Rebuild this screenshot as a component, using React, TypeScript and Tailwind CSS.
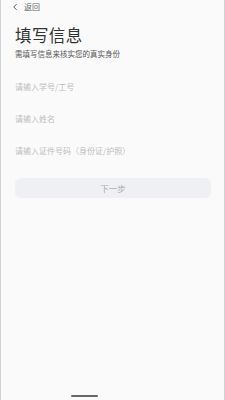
import { ChevronLeft } from "lucide-react"

const fields = ["请输入学号/工号", "请输入姓名", "请输入证件号码（身份证/护照）"]

export default function App() {
  return (
    <div
      className="flex h-[400px] w-[225px] flex-col border-x border-[#d2d2d2] bg-[#fafafa]"
      style={{ fontFamily: '"Noto Sans CJK SC", "Noto Sans", sans-serif' }}
    >
      <header className="flex h-[12px] items-center pl-[9px] pt-[1px]">
        <ChevronLeft className="h-[10px] w-[10px] text-[#444]" strokeWidth={2.2} />
        <span className="ml-[4px] text-[8px] leading-none text-[#666]">返回</span>
      </header>

      <div className="px-[14px]">
        <h1 className="mt-[14px] text-[16.5px] leading-[18px] tracking-[0.4px] text-[#333]">填写信息</h1>
        <p className="mt-[5px] text-[7.5px] leading-[9px] text-[#555]">需填写信息来核实您的真实身份</p>

        <div className="mt-[13px] flex flex-col">
          {fields.map((f) => (
            <div key={f} className="flex h-[32px] items-center">
              <input
                placeholder={f}
                className="w-full bg-transparent text-[8px] text-[#555] outline-none placeholder:text-[#bdbdbd]"
              />
            </div>
          ))}
        </div>

        <button className="mt-[11px] flex h-[20px] w-[196px] items-center justify-center rounded-[6px] bg-[#eff0f4] text-[8.5px] text-[#aaa]">
          下一步
        </button>
      </div>

      <div className="mt-auto mb-[3px] ml-[70px] h-[2px] w-[27px] rounded-full bg-[#666]" />
    </div>
  )
}
